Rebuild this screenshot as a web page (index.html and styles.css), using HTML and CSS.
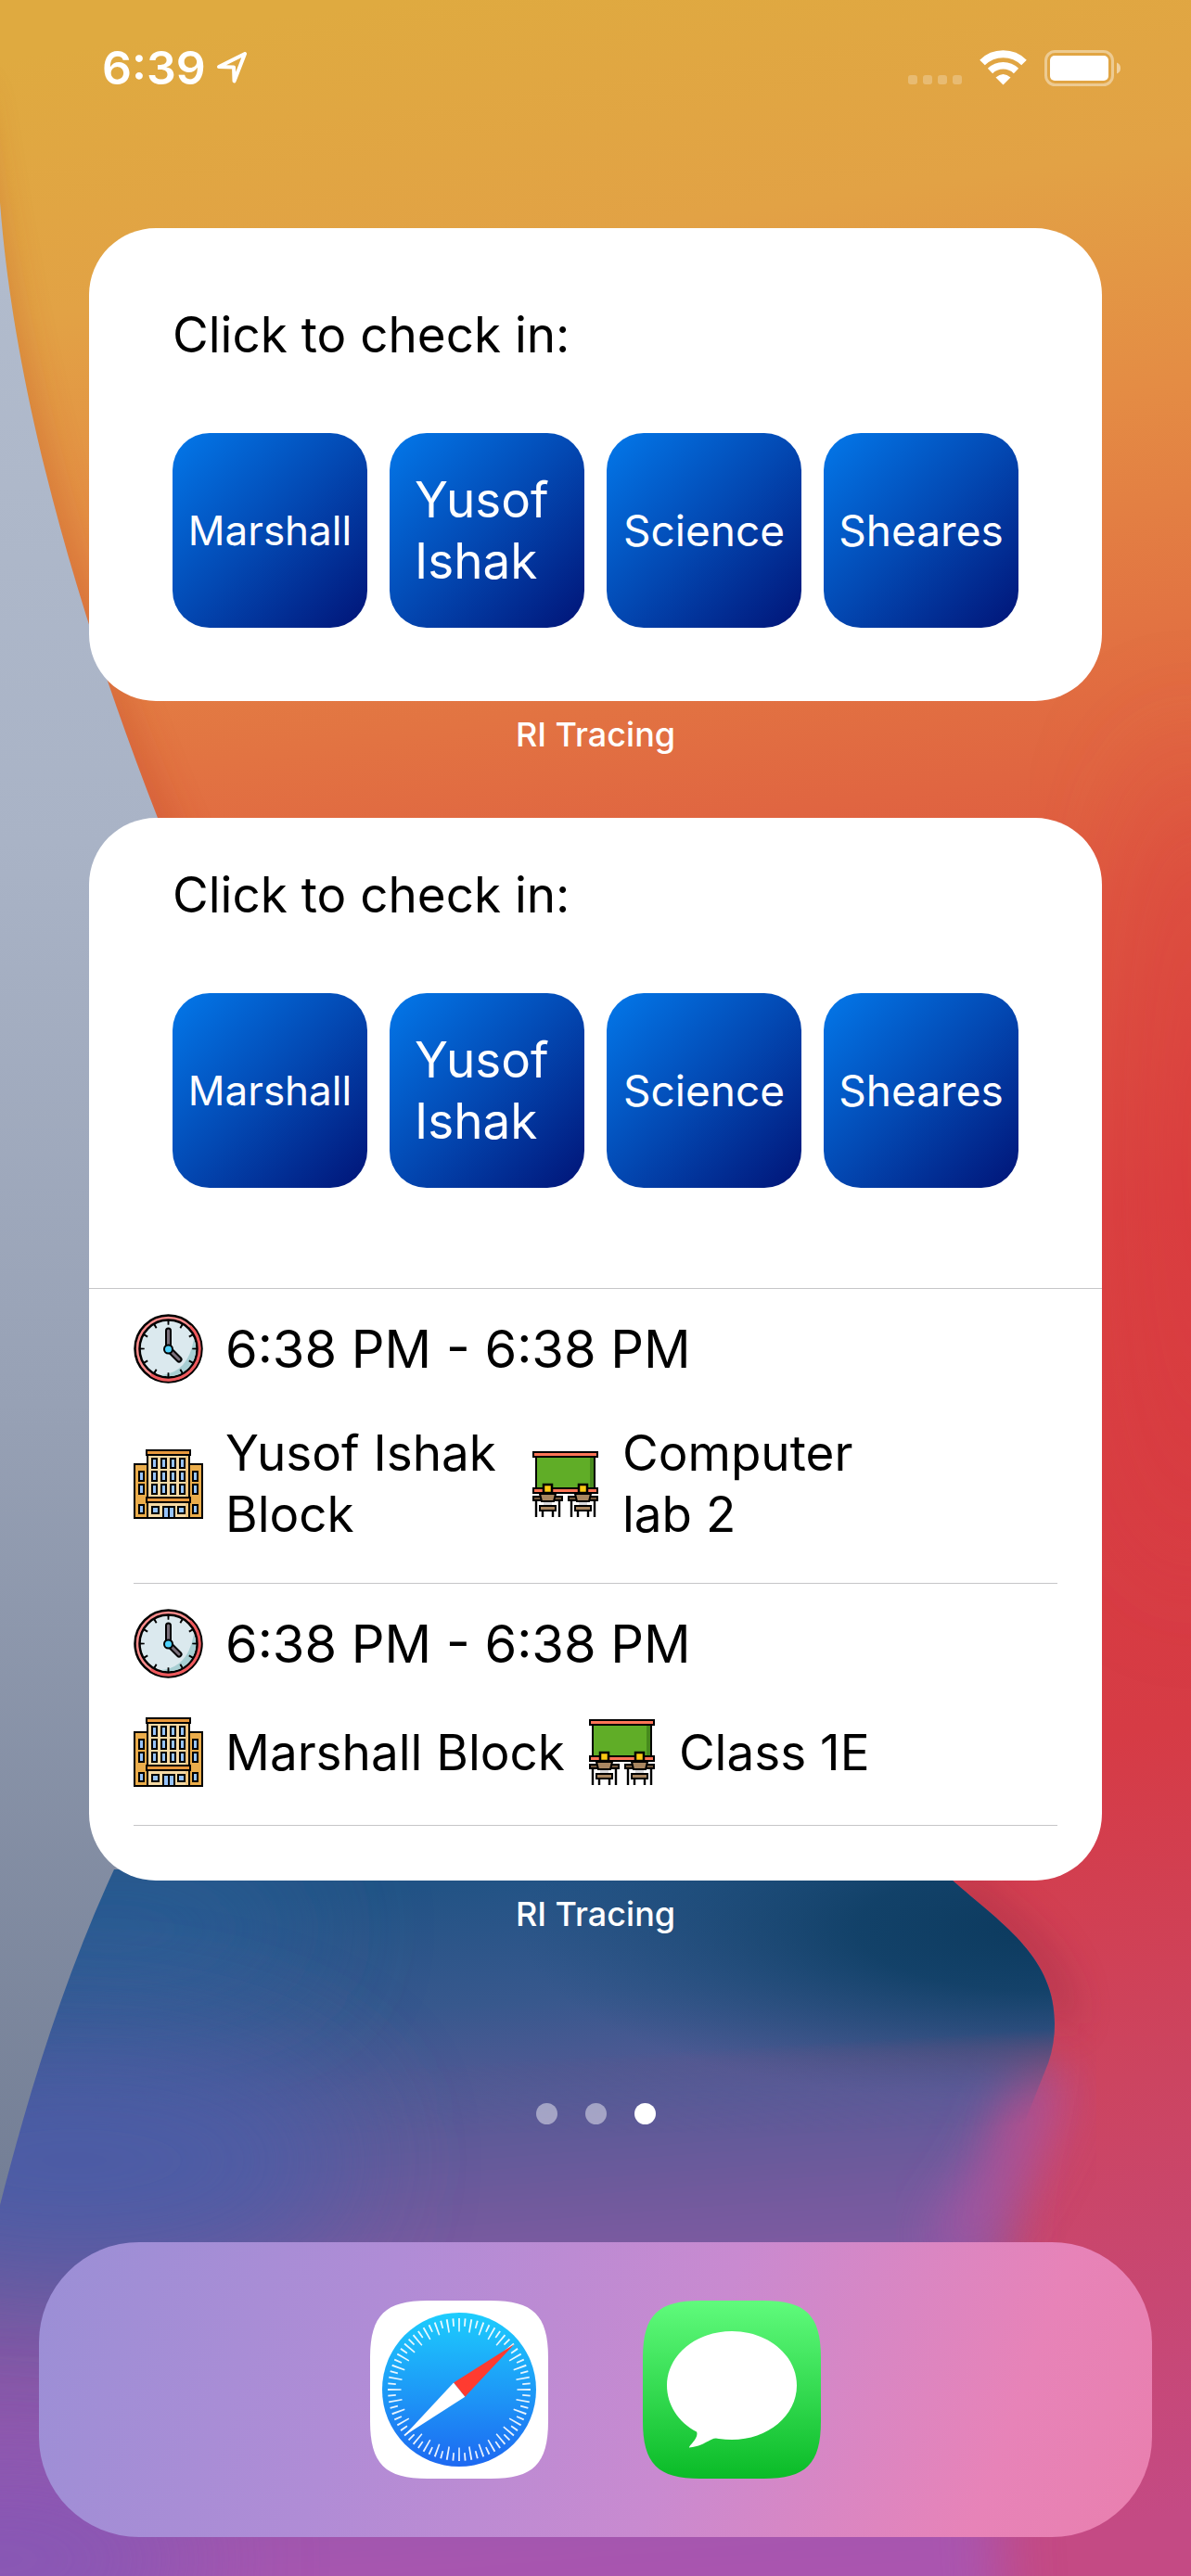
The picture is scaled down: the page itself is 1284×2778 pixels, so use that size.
FILE: index.html
```html
<!DOCTYPE html>
<html lang="en">
<head>
<meta charset="utf-8">
<meta name="viewport" content="width=device-width, initial-scale=1">
<title>Home Screen</title>
<link rel="stylesheet" href="styles.css">
</head>
<body>
<svg class="wallpaper" viewBox="0 0 1284 2778" preserveAspectRatio="none" aria-hidden="true">
  <defs>
    <linearGradient id="warm" gradientUnits="userSpaceOnUse" x1="420" y1="0" x2="840" y2="2778">
      <stop offset="0" stop-color="#dfaa40"/>
      <stop offset=".1" stop-color="#e2a245"/>
      <stop offset=".19" stop-color="#e48c44"/>
      <stop offset=".28" stop-color="#e27342"/>
      <stop offset=".38" stop-color="#de5840"/>
      <stop offset=".5" stop-color="#da4240"/>
      <stop offset=".7" stop-color="#d63b45"/>
      <stop offset=".83" stop-color="#cc4460"/>
      <stop offset="1" stop-color="#c44a84"/>
    </linearGradient>
    <linearGradient id="grey" x1="0" y1="0" x2="0" y2="1">
      <stop offset="0" stop-color="#b2bccd"/>
      <stop offset=".32" stop-color="#a9b3c6"/>
      <stop offset=".6" stop-color="#97a1b5"/>
      <stop offset="1" stop-color="#737e95"/>
    </linearGradient>
    <linearGradient id="cool" gradientUnits="userSpaceOnUse" x1="640" y1="2020" x2="700" y2="2778">
      <stop offset="0" stop-color="#225385"/>
      <stop offset=".17" stop-color="#37588d"/>
      <stop offset=".32" stop-color="#575a96"/>
      <stop offset=".5" stop-color="#775a9e"/>
      <stop offset=".75" stop-color="#9358ad"/>
      <stop offset="1" stop-color="#aa55af"/>
    </linearGradient>
    <radialGradient id="deep">
      <stop offset="0" stop-color="#0c3a5e"/>
      <stop offset=".35" stop-color="#0f3f65" stop-opacity=".9"/>
      <stop offset="1" stop-color="#1a4a75" stop-opacity="0"/>
    </radialGradient>
    <linearGradient id="fade" gradientUnits="userSpaceOnUse" x1="1100" y1="2190" x2="1106" y2="2290">
      <stop offset="0" stop-color="#fff"/>
      <stop offset="1" stop-color="#fff" stop-opacity="0"/>
    </linearGradient>
    <filter id="soft20" x="-50%" y="-50%" width="200%" height="200%"><feGaussianBlur stdDeviation="20"/></filter>
    <filter id="soft30" x="-50%" y="-50%" width="200%" height="200%"><feGaussianBlur stdDeviation="30"/></filter>
    <filter id="soft70" x="-100%" y="-300%" width="300%" height="700%"><feGaussianBlur stdDeviation="70"/></filter>
    <mask id="upper"><rect width="1284" height="2778" fill="url(#fade)"/></mask>
    <mask id="lower" maskUnits="userSpaceOnUse" x="0" y="0" width="1284" height="2778"><rect x="-300" y="2212" width="1900" height="1000" fill="#fff" filter="url(#soft20)"/></mask>
    <clipPath id="wave"><path d="M0 1900H930Q960 1975 1027 2028C1080 2075 1137 2110 1137 2182Q1137 2205 1130 2225L1100 2300H0Z"/></clipPath>
  </defs>
  <rect width="1284" height="2778" fill="url(#warm)"/>
  <ellipse cx="1290" cy="1250" rx="60" ry="450" fill="#d9363e" opacity=".5" filter="url(#soft70)"/>
  <path d="M-40 100C15 500 100 740 210 980" fill="none" stroke="#b83a24" stroke-width="22" opacity=".5" filter="url(#soft20)"/>
  <path d="M1027 2028C1080 2075 1145 2110 1145 2182" fill="none" stroke="#8e2640" stroke-width="22" opacity=".55" filter="url(#soft20)"/>
  <g mask="url(#lower)">
    <path d="M-300 1900H1050L1112 2225Q1080 2340 1075 2440Q1060 2600 1110 3200H-300Z" fill="url(#cool)" filter="url(#soft30)"/>
    <path d="M1128 2235C1105 2310 1070 2370 1020 2430" fill="none" stroke="#b054a4" stroke-width="50" opacity=".85" filter="url(#soft30)"/>
    <path d="M400 2800H1100" stroke="#b455a6" stroke-width="110" opacity=".7" filter="url(#soft30)"/>
  </g>
  <g mask="url(#upper)">
    <g clip-path="url(#wave)">
      <rect y="1900" width="1284" height="500" fill="url(#cool)"/>
      <ellipse cx="1120" cy="2080" rx="560" ry="190" fill="url(#deep)"/>
    </g>
  </g>
  <ellipse cx="120" cy="2080" rx="220" ry="60" fill="#30649f" opacity=".8" filter="url(#soft70)"/>
  <ellipse cx="80" cy="2330" rx="300" ry="130" fill="#4a5da8" opacity=".85" filter="url(#soft70)"/>
  <ellipse cx="0" cy="2760" rx="220" ry="90" fill="#7c59b8" opacity=".8" filter="url(#soft70)"/>
  <path d="M0 218C12 380 60 600 170 882V2016H123C70 2130 30 2260 0 2378Z" fill="url(#grey)"/>
</svg>

<svg class="symbols" aria-hidden="true">
  <symbol id="clock" viewBox="0 0 75 75">
    <circle cx="37.500" cy="37.500" r="36" fill="#fe8d8d" stroke="#000" stroke-width="2.500"/>
    <circle cx="37.500" cy="37.500" r="33.500" fill="none" stroke="#ef5a5d" stroke-width="3.500" pathLength="360" stroke-dasharray="170 190" transform="rotate(-46 37.500 37.500)"/>
    <circle cx="37.500" cy="37.500" r="31" fill="#dbe9ee" stroke="#000" stroke-width="2.500"/>
    <path d="M65 27A29 29 0 0 1 30 66Q59 63 65 27Z" fill="#a8cfd3"/>
    <circle cx="37.500" cy="37.500" r="28.500" fill="none" stroke="#000" stroke-width="5.500" pathLength="360" stroke-dasharray="4 26" stroke-dashoffset="2"/>
    <path d="M37.500 18V36M39 39L49 49" stroke="#000" stroke-width="7" stroke-linecap="round"/>
    <path d="M37.500 18V36M39 39L49 49" stroke="#7b717c" stroke-width="3" stroke-linecap="round"/>
    <circle cx="37.500" cy="38" r="4.500" fill="#4fd2fb" stroke="#000" stroke-width="2"/>
  </symbol>
  <symbol id="building" viewBox="0 0 75 75">
    <path d="M1 16H74V74H1Z" fill="#ebad4b" stroke="#000" stroke-width="2"/>
    <path d="M15 3H60V74H15Z" fill="#f5d9a4" stroke="#000" stroke-width="2"/>
    <path d="M56 7H59V73H56Z" fill="#efc47c"/>
    <path d="M14 1H61V6H14ZM14 52H61V57H14Z" fill="#e8983c" stroke="#000" stroke-width="2"/>
    <path fill="#98c5fd" stroke="#000" stroke-width="2" d="M20 10h5v10h-5zM30 10h5v10h-5zM40 10h5v10h-5zM50 10h5v10h-5zM20 24h5v10h-5zM30 24h5v10h-5zM40 24h5v10h-5zM50 24h5v10h-5zM20 38h5v10h-5zM30 38h5v10h-5zM40 38h5v10h-5zM50 38h5v10h-5zM6 24h5v10h-5zM6 38h5v10h-5zM6 60h5v9h-5zM64 24h5v10h-5zM64 38h5v10h-5zM64 60h5v9h-5zM20 62h7v7h-7zM48 62h7v7h-7zM32 62h6v12h-6zM38 62h6v12h-6z"/>
  </symbol>
  <symbol id="classroom" viewBox="-2 -2 75 75">
    <path d="M4 5H67V42H4Z" fill="#60ad27" stroke="#000" stroke-width="2"/>
    <path d="M62 6H66V40H62Z" fill="#478a1d"/>
    <path d="M1 1H70V6H1ZM1 40H70V45H1Z" fill="#ff7556" stroke="#000" stroke-width="2"/>
    <g id="desk">
      <path d="M12 36H21V45H12Z" fill="#fbc913" stroke="#000" stroke-width="2.500"/>
      <path d="M1 49H32V53H1Z" fill="#71563c" stroke="#000" stroke-width="2"/>
      <path d="M8 46H25L23 54H10Z" fill="#a98660" stroke="#000" stroke-width="2"/>
      <path d="M12 55H21V59H12Z" fill="#d9d9dc"/>
      <path d="M8 59H25V64H8Z" fill="#a98660" stroke="#000" stroke-width="2"/>
      <path d="M4 54V71M11 64V71M22 64V71M29 54V71" stroke="#000" stroke-width="2.400"/>
    </g>
    <use href="#desk" x="38"/>
  </symbol>
</svg>

<div class="screen">
  <header class="status">
    <div class="status-left">
      <time class="time">6:39</time>
      <svg class="location" viewBox="0 0 32 34" role="img" aria-label="Location"><path d="M2 16L30 2L18.500 31.500L18 16.500Z" fill="none" stroke="#fff" stroke-width="4" stroke-linejoin="round"/></svg>
    </div>
    <div class="status-right">
      <svg class="signal" viewBox="0 0 58 10" role="img" aria-label="No signal"><g fill="#fff" opacity=".25"><rect width="10" height="10" rx="3"/><rect x="16" width="10" height="10" rx="3"/><rect x="32" width="10" height="10" rx="3"/><rect x="48" width="10" height="10" rx="3"/></g></svg>
      <svg class="wifi" viewBox="0 0 51 38" role="img" aria-label="Wi-Fi"><g fill="none" stroke="#fff"><path d="M3 13.500A32 32 0 0 1 48 13.500" stroke-width="8"/><path d="M11.500 22.500A20 20 0 0 1 39.500 22.500" stroke-width="7.500"/></g><path d="M17.500 29.500Q25.500 22.500 33.500 29.500L25.500 37.500Z" fill="#fff"/></svg>
      <svg class="battery" viewBox="0 0 82 39" role="img" aria-label="Battery full"><rect x="1.500" y="1.500" width="72" height="36" rx="10" fill="none" stroke="#fff" stroke-opacity=".42" stroke-width="3"/><rect x="6" y="6" width="63" height="27" rx="5" fill="#fff"/><path d="M78 13.500Q82 15 82 19.500Q82 24 78 25.500Z" fill="#fff" fill-opacity=".5"/></svg>
    </div>
  </header>

  <main class="widgets">
    <section class="widget-slot">
      <div class="widget">
        <div class="checkin checkin-medium">
          <h2 class="prompt">Click to check in:</h2>
          <div class="places">
            <button class="place place-small" type="button">Marshall</button>
            <button class="place place-large" type="button"><span>Yusof Ishak</span></button>
            <button class="place" type="button">Science</button>
            <button class="place" type="button">Sheares</button>
          </div>
        </div>
      </div>
      <p class="widget-name">RI Tracing</p>
    </section>

    <section class="widget-slot">
      <div class="widget widget-tall">
        <div class="checkin checkin-large">
          <h2 class="prompt">Click to check in:</h2>
          <div class="places">
            <button class="place place-small" type="button">Marshall</button>
            <button class="place place-large" type="button"><span>Yusof Ishak</span></button>
            <button class="place" type="button">Science</button>
            <button class="place" type="button">Sheares</button>
          </div>
        </div>
        <ul class="visits">
          <li class="visit">
            <div class="visit-row visit-time"><svg class="icon"><use href="#clock"/></svg><span>6:38 PM - 6:38 PM</span></div>
            <div class="visit-row">
              <svg class="icon"><use href="#building"/></svg><span class="wrap-block">Yusof Ishak Block</span>
              <svg class="icon"><use href="#classroom"/></svg><span class="wrap-room">Computer lab 2</span>
            </div>
          </li>
          <li class="visit">
            <div class="visit-row visit-time"><svg class="icon"><use href="#clock"/></svg><span>6:38 PM - 6:38 PM</span></div>
            <div class="visit-row">
              <svg class="icon"><use href="#building"/></svg><span>Marshall Block</span>
              <svg class="icon"><use href="#classroom"/></svg><span>Class 1E</span>
            </div>
          </li>
        </ul>
      </div>
      <p class="widget-name">RI Tracing</p>
    </section>
  </main>

  <div class="pager" role="img" aria-label="Page 3 of 3"><i></i><i></i><i class="current"></i></div>

  <nav class="dock" aria-label="Dock">
    <a class="app" href="#safari" aria-label="Safari">
      <svg viewBox="0 0 192 192">
        <defs><linearGradient id="sea" x1="0" y1="0" x2="0" y2="1"><stop offset="0" stop-color="#1dcdfd"/><stop offset="1" stop-color="#1d68f1"/></linearGradient></defs>
        <path d="M62 0H130C176 0 192 16 192 62V130C192 176 176 192 130 192H62C16 192 0 176 0 130V62C0 16 16 0 62 0Z" fill="#fff"/>
        <circle cx="96" cy="96" r="83" fill="url(#sea)"/>
        <g fill="none" stroke="#fff" stroke-opacity=".9">
          <circle cx="96" cy="96" r="69.700" stroke-width="14.500" pathLength="360" stroke-dasharray="1.400 8.600" stroke-dashoffset=".7"/>
          <circle cx="96" cy="96" r="72.700" stroke-width="8.500" pathLength="360" stroke-dasharray="1.400 8.600" stroke-dashoffset="5.700"/>
        </g>
        <path d="M155.500 47L90 88.500L102.300 103.700Z" fill="#ff3b30"/>
        <path d="M36.500 146L90 88.500L102.300 103.700Z" fill="#fff"/>
      </svg>
    </a>
    <a class="app" href="#messages" aria-label="Messages">
      <svg viewBox="0 0 192 192">
        <defs><linearGradient id="leaf" x1="0" y1="0" x2="0" y2="1"><stop offset="0" stop-color="#60fb7c"/><stop offset="1" stop-color="#0abb27"/></linearGradient></defs>
        <path d="M62 0H130C176 0 192 16 192 62V130C192 176 176 192 130 192H62C16 192 0 176 0 130V62C0 16 16 0 62 0Z" fill="url(#leaf)"/>
        <path d="M96 33C135 33 166 59 166 91.500S135 150 96 150Q89 150 82 149C73 146 69 157 50 158.500C49 157 61 148 58 141.500C38 131 26 112 26 91.500C26 59 57 33 96 33Z" fill="#fff"/>
      </svg>
    </a>
  </nav>
</div>
</body>
</html>
```
FILE: styles.css
```css
* {
  box-sizing: border-box;
}

body {
  margin: 0;
  position: relative;
  font-family: Inter, "Liberation Sans", sans-serif;
  color: #000;
}

h2,
p,
ul {
  margin: 0;
  padding: 0;
  font-weight: 400;
  list-style: none;
}

/* The wallpaper sits behind everything else on the page. */
.wallpaper {
  position: absolute;
  inset: 0;
  width: 100%;
  height: 100%;
}

.symbols {
  position: absolute;
  width: 0;
  height: 0;
}

.screen {
  position: relative;
  display: flex;
  flex-direction: column;
  min-height: 100vh;
}

/* Status bar */
.status {
  display: flex;
  justify-content: space-between;
  align-items: flex-start;
  padding: 42px 76px 0 110px;
  height: 246px;
}

.status-left,
.status-right {
  display: flex;
  align-items: center;
  height: 62px;
}

.status-left {
  gap: 12px;
}

.status-right {
  gap: 19px;
}

.time {
  color: #fff;
  font-size: 50px;
  font-weight: 600;
  line-height: 62px;
}

.location {
  width: 32px;
  height: 34px;
}

.signal {
  width: 58px;
  height: 10px;
  margin-top: 26px;
}

.wifi {
  width: 51px;
  height: 38px;
}

.battery {
  width: 82px;
  height: 39px;
}

/* Widgets */
.widgets {
  display: flex;
  flex-direction: column;
  gap: 68px;
  padding: 0 96px;
}

.widget {
  background: #fff;
  border-radius: 72px;
  overflow: hidden;
}

.widget-tall {
  padding-bottom: 59px;
}

.widget-name {
  margin-top: 14px;
  color: #fff;
  font-size: 36px;
  font-weight: 500;
  line-height: 44px;
  text-align: center;
}

.checkin {
  display: flex;
  flex-direction: column;
  gap: 72px;
}

.checkin-medium {
  padding: 81px 90px 79px;
}

.checkin-large {
  padding: 49px 90px 108px;
}

.prompt {
  font-size: 53px;
  line-height: 68px;
}

.places {
  display: grid;
  grid-template-columns: repeat(4, 1fr);
  gap: 24px;
}

.place {
  display: flex;
  align-items: center;
  justify-content: center;
  aspect-ratio: 1;
  min-width: 0;
  padding: 0;
  border: 0;
  border-radius: 40px;
  background: linear-gradient(135deg, #0378ea, #0348b2 50%, #011477);
  color: #fff;
  font-family: inherit;
  font-size: 46px;
  line-height: 66px;
}

.place-small {
  font-size: 44px;
}

.place-large {
  padding: 0 27px;
  font-size: 53px;
  text-align: left;
}

/* Visit history */
.visits {
  padding: 0 48px;
  border-top: 1px solid #c6c6c8;
}

.visit {
  display: flex;
  flex-direction: column;
  gap: 42px;
  padding: 27px 0 41px;
  border-bottom: 1px solid #c6c6c8;
}

.visit-row {
  display: flex;
  align-items: center;
  gap: 24px;
  font-size: 53px;
  line-height: 66px;
}

.visit-time {
  font-size: 56px;
}

.icon {
  flex: none;
  width: 75px;
  height: 75px;
}

.wrap-block {
  width: 305px;
}

.wrap-room {
  width: 290px;
}

/* Page indicator */
.pager {
  display: flex;
  justify-content: center;
  gap: 30px;
  margin-top: auto;
}

.pager i {
  width: 23px;
  height: 23px;
  border-radius: 50%;
  background: #fff;
  opacity: .45;
}

.pager .current {
  opacity: 1;
}

/* Dock */
.dock {
  display: flex;
  justify-content: center;
  gap: 102px;
  margin: 127px 42px 42px;
  padding: 63px;
  border-radius: 108px;
  background: linear-gradient(110deg, #9a8fd6, #b08cd6 30%, #c98ad0 58%, #e783b8 85%, #e97fae);
}

.app,
.app svg {
  display: block;
  width: 192px;
  height: 192px;
}
```
